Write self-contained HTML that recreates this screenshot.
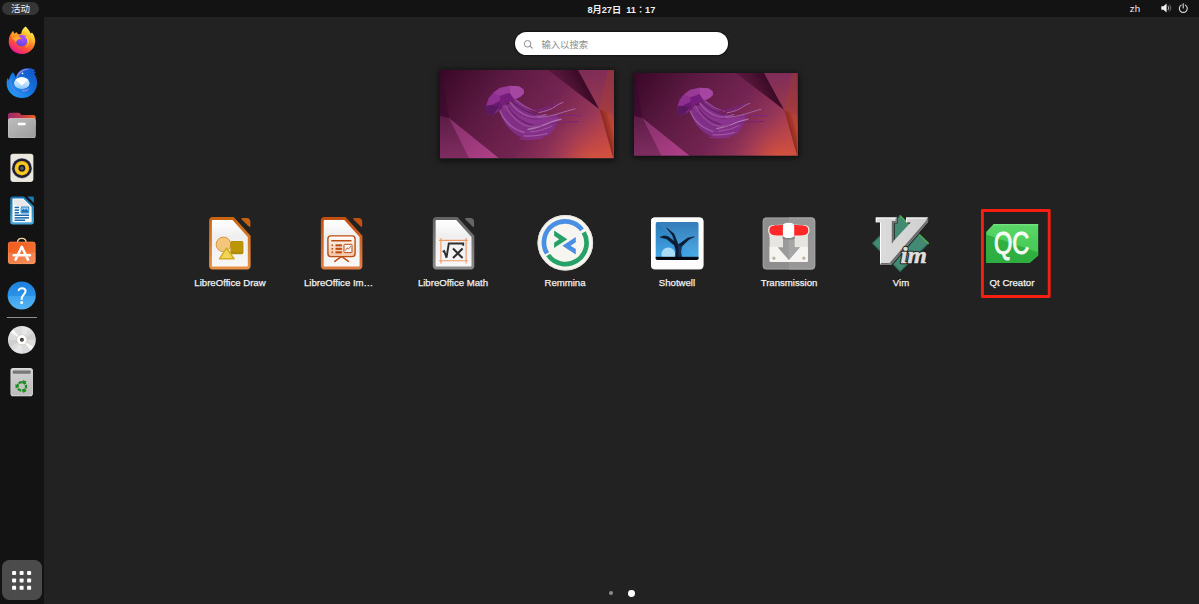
<!DOCTYPE html>
<html lang="zh">
<head>
<meta charset="utf-8">
<title>活动</title>
<style>
html,body{margin:0;padding:0;}
body{width:1199px;height:604px;overflow:hidden;background:#222222;position:relative;
  font-family:"Liberation Sans","Noto Sans CJK SC",sans-serif;color:#f2f2f2;}
.abs{position:absolute;}
#topbar{position:absolute;left:0;top:0;width:1199px;height:17px;background:#131313;}
#dock{position:absolute;left:0;top:17px;width:43.5px;height:587px;background:#131313;}
#act{position:absolute;left:2px;top:2px;width:37px;height:13px;border-radius:7px;background:#353535;
  font-size:9.5px;line-height:13.8px;text-align:center;color:#f0f0f0;}
#clock{position:absolute;left:587.4px;top:0;height:17px;line-height:21.4px;
  font-size:9.2px;font-weight:bold;color:#f0f0f0;white-space:pre;}
#zh{position:absolute;left:1129.8px;top:0;height:17px;line-height:18.2px;font-size:9.7px;color:#f0f0f0;}
#search{position:absolute;left:515.1px;top:31.7px;width:212.6px;height:23.8px;border-radius:12px;background:#ffffff;box-shadow:0 0 0.6px 1.2px #141414;}
#search span{position:absolute;left:26.4px;top:0;line-height:27.6px;font-size:9.3px;color:#8c8c8c;}
.lbl{position:absolute;top:276px;-webkit-text-stroke:0.25px #f2f2f2;width:110px;text-align:center;font-size:9.6px;line-height:13px;color:#f2f2f2;
  font-family:"Liberation Sans",sans-serif;white-space:nowrap;}
#sel{position:absolute;left:981px;top:209.1px;width:63.9px;height:83.1px;border:2.9px solid #f81f12;}
#apps{position:absolute;left:2px;top:560px;width:40px;height:40px;border-radius:7.5px;background:#4b4b4b;}
.dot{position:absolute;border-radius:50%;}
</style>
</head>
<body>
<div id="topbar">
  <div id="act">活动</div>
  <div id="clock">8月27日  11∶17</div>
  <div id="zh">zh</div>
  <svg class="abs" style="left:1156px;top:0" width="40" height="17" viewBox="1156 0 40 17">
    <path d="M1161.3 6.2 L1163.4 6.2 L1166.6 3.4 L1166.6 12.4 L1163.4 9.7 L1161.3 9.7 Z" fill="#f0f0f0"/>
    <path d="M1167.9 5.9 C1169 7 1169 8.9 1167.9 10" fill="none" stroke="#d0d0d0" stroke-width="0.9"/>
    <path d="M1169.2 4.5 C1171.2 6.4 1171.2 9.6 1169.2 11.5" fill="none" stroke="#777" stroke-width="0.9"/>
    <path d="M1181.2 5.1 A3.95 3.95 0 1 0 1185.4 5.1" fill="none" stroke="#d8d8d8" stroke-width="1.1" stroke-linecap="round"/>
    <path d="M1183.2 3.7 L1183.2 8" stroke="#d8d8d8" stroke-width="1.1" stroke-linecap="round"/>
  </svg>
</div>
<div id="dock"></div>
<!--DOCK-->
<svg class="abs" style="left:0;top:17px" width="44" height="587" viewBox="0 17 44 587">
<defs>
  <linearGradient id="ffBody" x1="0.8" y1="0.08" x2="0.28" y2="0.98">
    <stop offset="0" stop-color="#fff36a"/><stop offset="0.25" stop-color="#ffc428"/><stop offset="0.5" stop-color="#ff7c28"/><stop offset="0.72" stop-color="#ff4a3e"/><stop offset="1" stop-color="#e6169e"/>
  </linearGradient>
  <radialGradient id="ffGlobe" cx="0.6" cy="0.25" r="0.9">
    <stop offset="0" stop-color="#b050f8"/><stop offset="0.55" stop-color="#8048ee"/><stop offset="1" stop-color="#4a44d0"/>
  </radialGradient>
  <linearGradient id="ffTail" x1="0" y1="0" x2="1" y2="0.6">
    <stop offset="0" stop-color="#ff7a1f"/><stop offset="0.5" stop-color="#ffb02a"/><stop offset="1" stop-color="#ff8a2a"/>
  </linearGradient>
  <linearGradient id="tbBody" x1="0.85" y1="0.1" x2="0.15" y2="0.9">
    <stop offset="0" stop-color="#1258c8"/><stop offset="0.45" stop-color="#1470dc"/><stop offset="1" stop-color="#2398f4"/>
  </linearGradient>
  <linearGradient id="tbEnv" x1="0" y1="0" x2="0" y2="1">
    <stop offset="0" stop-color="#eef7ff"/><stop offset="0.45" stop-color="#c8e4fd"/><stop offset="1" stop-color="#8cc8f8"/>
  </linearGradient>
  <linearGradient id="flBack" x1="0" y1="0" x2="1" y2="0">
    <stop offset="0" stop-color="#9c2a6e"/><stop offset="0.5" stop-color="#c23a4a"/><stop offset="1" stop-color="#ee5f1a"/>
  </linearGradient>
  <linearGradient id="flFront" x1="0" y1="0" x2="1" y2="1">
    <stop offset="0" stop-color="#bdbdbd"/><stop offset="1" stop-color="#9c9c9c"/>
  </linearGradient>
  <linearGradient id="lowB" x1="0" y1="0" x2="0" y2="1">
    <stop offset="0" stop-color="#1573b0"/><stop offset="1" stop-color="#4baadc"/>
  </linearGradient>
  <linearGradient id="swBag" x1="0" y1="0" x2="1" y2="1">
    <stop offset="0" stop-color="#f05a1c"/><stop offset="1" stop-color="#f47a3c"/>
  </linearGradient>
  <linearGradient id="hlp" x1="0" y1="0" x2="0" y2="1">
    <stop offset="0" stop-color="#1d7fdc"/><stop offset="0.52" stop-color="#2a93e8"/><stop offset="0.53" stop-color="#3ea2ee"/><stop offset="1" stop-color="#56b6f4"/>
  </linearGradient>
  <linearGradient id="trash" x1="0" y1="0" x2="0" y2="1">
    <stop offset="0" stop-color="#d2d2d2"/><stop offset="1" stop-color="#bcbcbc"/>
  </linearGradient>
</defs>

<!-- Firefox -->
<g>
  <path d="M25.5 26.4 C27.6 28.2 29.6 30.6 30.6 33.4 C31.2 32.6 31.9 32.4 32.4 32.9 C34.3 35.4 35.3 38.6 35.2 41.6 C35 48.6 29.2 54 22 54 C14.7 54 8.7 48.4 8.7 41.4 C8.7 37.4 10.4 33.6 13.1 31.1 C13.3 32.2 13.9 33.2 14.7 33.9 C15.1 33.1 15.7 32.5 16.4 32.2 C16.9 33.2 17.8 34 18.8 34.4 C19.6 34 20.4 33.8 21.2 33.7 C21.4 30.8 23 28.2 25.5 26.4 Z" fill="url(#ffBody)"/>
  <circle cx="21.6" cy="40.6" r="5.7" fill="url(#ffGlobe)"/>
  <path d="M11.9 38.3 C13.6 36.2 16.3 35.4 18.6 36.2 C20 36.7 21.2 37.8 22 39 C20.6 38.8 19.2 39 18.2 39.6 C17.2 40.2 16.3 41.2 16 42.4 C15.2 41.2 14.6 40 13.4 39.4 C12.9 39.1 12.3 38.8 11.9 38.3 Z" fill="url(#ffTail)"/>
  <path d="M26 35.6 C28.8 37.6 29.8 41.4 28.4 44.6 C27.6 46.4 26.2 47.8 24.4 48.6 C27.6 46.6 28.6 42.6 27 39.6 C26.4 38.4 25.4 37.4 24.2 36.8 Z" fill="#ffd23a" opacity="0.85"/><path d="M13.1 31.1 C13.3 32.2 13.9 33.2 14.7 33.9 C15.1 33.1 15.7 32.5 16.4 32.2 C16.9 33.2 17.8 34 18.8 34.4 C16.2 34.6 13.4 36 11.9 38.3 C11.4 36 11.8 33.2 13.1 31.1 Z" fill="#ffa024" opacity="0.9"/><path d="M22 35 C23.8 34.8 25.6 35.4 26.8 36.4 C26 36.4 25.4 36.8 25 37.4 C24.2 36.2 23.2 35.4 22 35 Z" fill="#c060f0"/>
</g>

<!-- Thunderbird -->
<g>
  <path d="M12.7 72.3 C14.2 73.6 15.4 75.6 15.9 77.8 C16.6 75.2 18 72.6 20.2 70.8 C23.2 68.2 27.6 67.4 31.4 68.6 C32.8 69 34.2 69.4 35.4 70.2 C34.8 70.6 34.2 70.8 33.6 71.2 C34.6 71.4 35.4 71.8 36 72.4 C35.2 72.6 34.6 73 34.2 73.4 C36.2 76.2 37.2 79.6 37.1 83.2 C36.9 91.4 30.4 98.1 22.2 98.1 C13.8 98.1 6.6 91.6 6.6 83.2 C6.6 81.4 7 79.4 7.8 77.8 C8 78.8 8.4 79.6 9 80.2 C9.4 77.2 10.8 74.4 12.7 72.3 Z" fill="url(#tbBody)"/>
  <path d="M16.4 76.6 C17.2 73.2 20 70.4 23.4 69.4 C25.6 68.8 28 68.9 30 69.6 C27 69.6 23.6 70.6 21.2 72.6 C19.4 74 17.8 76 17 78.2 Z" fill="#9a86e8" opacity="0.85"/>
  <path d="M10.2 81.6 C10.2 86 12.4 90.2 16 92.6 C18.2 94 20.8 94.8 23.4 94.6 C19.6 94 16 91.6 14 88.4 C12.6 86.4 11.6 84 11.4 81.6 C11.4 79.8 11.6 78 12.4 76.4 C11 77.8 10.2 79.6 10.2 81.6 Z" fill="#8a7ae0" opacity="0.55"/>
  <ellipse cx="21.8" cy="83.2" rx="7.7" ry="5.9" fill="url(#tbEnv)"/>
  <path d="M15.4 80 L21.8 85.8 L28.2 80 C26.6 78.2 24.4 77.3 21.8 77.3 C19.2 77.3 17 78.2 15.4 80 Z" fill="#ffffff"/>
  <path d="M15.2 80.2 L21.8 86.2 L28.4 80.2" fill="none" stroke="#a6d2f8" stroke-width="0.7"/>
  <path d="M21.4 89.6 C24.4 90 27.6 89.4 30.2 87.4 C28.4 90.4 25.4 92 22.6 91.6 Z" fill="#a78be6" opacity="0.7"/>
  <circle cx="22.5" cy="73.4" r="0.8" fill="#ffffff"/>
</g>

<!-- Files -->
<g>
  <path d="M8 115 C8 113.8 9 112.8 10.2 112.8 L18.6 112.8 C19.2 112.8 19.8 113.1 20.2 113.6 L21.2 115 L33.6 115 C34.8 115 35.7 116 35.7 117.2 L35.7 126 L8 126 Z" fill="url(#flBack)"/>
  <rect x="8" y="118.2" width="27.6" height="19.9" rx="2.2" fill="#d9d9d9"/>
  <rect x="8.3" y="118.7" width="27" height="19.1" rx="1.9" fill="url(#flFront)"/>
  <rect x="17.8" y="122.7" width="7.8" height="2.5" rx="0.7" fill="#ffffff"/>
</g>

<!-- Rhythmbox -->
<g>
  <rect x="10.4" y="153.7" width="23" height="28.2" rx="2.8" fill="#dedbcf"/>
  <rect x="11" y="154.3" width="21.8" height="27" rx="2.2" fill="#ebe9df"/>
  <circle cx="21.9" cy="168.2" r="10.3" fill="#1e1d36" opacity="0.35"/><circle cx="21.9" cy="168.2" r="9.7" fill="#1e1d36"/>
  <circle cx="21.9" cy="168.2" r="7.3" fill="#f3bf10"/>
  <circle cx="21.9" cy="168.2" r="5.2" fill="none" stroke="#f9d548" stroke-width="0.9"/>
  <circle cx="21.9" cy="168.2" r="3.4" fill="#1a1a2c"/>
  <circle cx="21.9" cy="168.2" r="1.8" fill="#5a5a62"/>
</g>

<!-- LibreOffice Writer -->
<g>
  <path d="M12.6 196.4 L24 196.4 L33.9 206.2 L33.9 222 C33.9 223.4 32.8 224.4 31.4 224.4 L12.6 224.4 C11.2 224.4 10.2 223.4 10.2 222 L10.2 198.8 C10.2 197.4 11.2 196.4 12.6 196.4 Z" fill="url(#lowB)"/>
  <path d="M13.2 198.6 L23.3 198.6 L31.6 207 L31.6 221.4 C31.6 221.9 31.2 222.2 30.8 222.2 L13.2 222.2 C12.8 222.2 12.5 221.9 12.5 221.4 L12.5 199.3 C12.5 198.9 12.8 198.6 13.2 198.6 Z" fill="#ffffff"/>
  <path d="M13.6 199.6 L23 199.6 L30.6 207.2 L30.6 209 L13.6 205 Z" fill="#e6e6e6" opacity="0.9"/>
  <path d="M27.3 196.6 L32.6 196.6 C33.4 196.6 33.9 197.2 33.9 198 L33.9 202.9 Z" fill="#1a7ab8"/>
  <g fill="#1768ac">
    <rect x="14.6" y="206.7" width="4.4" height="1.5"/>
    <rect x="14.6" y="209.4" width="4.4" height="1.5"/>
    <rect x="14.6" y="212" width="4.4" height="1.5"/>
    <rect x="14.6" y="214.5" width="14.4" height="1.5"/>
    <rect x="14.6" y="217.1" width="14.4" height="1.5"/>
    <rect x="14.6" y="219.5" width="10.6" height="1.5"/>
  </g>
  <rect x="20.6" y="206.6" width="8.6" height="6.9" rx="1.3" fill="#2a86c8"/>
  <rect x="21.5" y="207.5" width="6.8" height="5.1" rx="0.5" fill="#9fd0f0"/>
  <path d="M21.5 212.6 L21.5 211 L23.4 208.6 L24.6 210.2 L26 208.4 L28.3 211.2 L28.3 212.6 Z" fill="#1c72b4"/>
</g>

<!-- Ubuntu Software -->
<g>
  <path d="M17.4 243.2 C17.4 240.2 19.2 238.4 21.8 238.4 C24.4 238.4 26.2 240.2 26.2 243.2" fill="none" stroke="#f3d9a4" stroke-width="1.3"/>
  <rect x="8" y="241.8" width="27.5" height="22.2" rx="2.4" fill="url(#swBag)"/>
  <path d="M8 252.8 L35.5 252.8 L35.5 261.6 C35.5 262.9 34.4 264 33.1 264 L10.4 264 C9.1 264 8 262.9 8 261.6 Z" fill="#ffffff" opacity="0.14"/>
  <rect x="8.3" y="242.1" width="26.9" height="21.6" rx="2.1" fill="none" stroke="#ffb48a" stroke-width="0.5" opacity="0.6"/>
  <path d="M15.6 259.6 L21.8 246.8 L28 259.6" fill="none" stroke="#ffffff" stroke-width="2.5" stroke-linejoin="round" stroke-linecap="round"/>
  <path d="M13.8 255.2 L29.9 255.2" fill="none" stroke="#ffffff" stroke-width="2.5" stroke-linecap="round"/>
  <path d="M14 256.3 L29.6 256.3" fill="none" stroke="#f3b89a" stroke-width="0.5"/>
</g>

<!-- Help -->
<g>
  <circle cx="21.7" cy="295.5" r="14.1" fill="url(#hlp)"/>
  <path d="M18.7 290.3 C19.2 288.8 20.4 288.2 22 288.2 C24.2 288.2 25.6 289.4 25.6 291.1 C25.6 292.7 24.7 293.6 23.5 294.9 C22.3 296.2 21.7 297.2 21.7 298.9" fill="none" stroke="#ffffff" stroke-width="2" stroke-linecap="round"/>
  <circle cx="21.6" cy="302.6" r="1.5" fill="#ffffff"/>
</g>

<!-- separator -->
<rect x="6.8" y="317" width="30.2" height="1" fill="#8f8f8f"/>

<!-- Disc -->
<g transform="translate(21.9 339.8)">
  <circle r="13.9" fill="#d2d2d2"/>
  <circle r="13.4" fill="#dcdcdc"/>
  <path d="M0 0 L-11.3 -7.3 A13.4 13.4 0 0 1 -8.7 -10.3 Z" fill="#f8f8f8"/>
  <path d="M0 0 L11.3 7.3 A13.4 13.4 0 0 1 8.7 10.3 Z" fill="#f8f8f8"/>
  <path d="M0 0 L0 -13.4 A13.4 13.4 0 0 1 7.7 -10.9 Z" fill="#e7e7e7"/>
  <path d="M0 0 L0 13.4 A13.4 13.4 0 0 1 -7.7 10.9 Z" fill="#e7e7e7"/>
  <path d="M0 0 L-13.4 0 A13.4 13.4 0 0 0 -11.5 6.9 Z" fill="#cfcfcf"/>
  <path d="M0 0 L13.4 0 A13.4 13.4 0 0 0 11.5 -6.9 Z" fill="#cfcfcf"/>
  <circle r="5.4" fill="#cfc5ac"/>
  <circle r="4.8" fill="#ffffff"/>
  <circle r="2" fill="#3a3a3a"/>
  <circle r="1" fill="#555555"/>
</g>

<!-- Trash -->
<g>
  <rect x="10.5" y="368" width="22.4" height="28.2" rx="2.8" fill="#e2e2e2"/>
  <rect x="11.2" y="368.7" width="21" height="26.8" rx="2.2" fill="url(#trash)"/>
  <rect x="12.7" y="370.6" width="18" height="3.2" rx="1" fill="#787878"/>
  <g transform="translate(21.8 386.4)">
    <circle r="4.3" fill="none" stroke="#1d8f1d" stroke-width="2.3" stroke-dasharray="3.7 0.803" transform="rotate(-84)"/>
    <g fill="#1d8f1d">
      <path id="rcyA" d="M1.2 -6.4 L5 -4.6 L1.6 -2.2 Z"/>
      <use href="#rcyA" transform="rotate(120)"/>
      <use href="#rcyA" transform="rotate(240)"/>
    </g>
  </g>
</g>
</svg>
<!--/DOCK-->
<div id="apps"><svg class="abs" style="left:0;top:0" width="40" height="40" viewBox="0 0 40 40"><rect x="10.1" y="10.9" width="4" height="4" rx="0.9" fill="#ffffff"/><rect x="17.6" y="10.9" width="4" height="4" rx="0.9" fill="#ffffff"/><rect x="25.1" y="10.9" width="4" height="4" rx="0.9" fill="#ffffff"/><rect x="10.1" y="18.4" width="4" height="4" rx="0.9" fill="#ffffff"/><rect x="17.6" y="18.4" width="4" height="4" rx="0.9" fill="#ffffff"/><rect x="25.1" y="18.4" width="4" height="4" rx="0.9" fill="#ffffff"/><rect x="10.1" y="25.8" width="4" height="4" rx="0.9" fill="#ffffff"/><rect x="17.6" y="25.8" width="4" height="4" rx="0.9" fill="#ffffff"/><rect x="25.1" y="25.8" width="4" height="4" rx="0.9" fill="#ffffff"/></svg></div>
<div id="search"><svg class="abs" style="left:6px;top:5px" width="16" height="16" viewBox="521 37 16 16"><circle cx="527.6" cy="43.8" r="3.3" fill="none" stroke="#8a8a8a" stroke-width="0.95"/><path d="M530 46.2 L532.4 48.2" stroke="#8a8a8a" stroke-width="1.1" stroke-linecap="round"/></svg><span>输入以搜索</span></div>

<!--WP-->
<svg class="abs" style="left:0;top:0" width="0" height="0">
<defs>
  <linearGradient id="wpBase" gradientUnits="userSpaceOnUse" x1="10" y1="-10" x2="160" y2="100">
    <stop offset="0" stop-color="#3a0828"/><stop offset="0.3" stop-color="#5c1a42"/><stop offset="0.58" stop-color="#742452"/><stop offset="0.78" stop-color="#963658"/><stop offset="0.92" stop-color="#bc4648"/><stop offset="1" stop-color="#d4523a"/>
  </linearGradient>
  <radialGradient id="wpGlow" gradientUnits="userSpaceOnUse" cx="154" cy="94" r="50">
    <stop offset="0" stop-color="#dc563a" stop-opacity="0.9"/><stop offset="0.5" stop-color="#c84a44" stop-opacity="0.4"/><stop offset="1" stop-color="#b04050" stop-opacity="0"/>
  </radialGradient>
  <linearGradient id="wpDarkTri" gradientUnits="userSpaceOnUse" x1="140" y1="10" x2="118" y2="22">
    <stop offset="0" stop-color="#3e0c28"/><stop offset="1" stop-color="#4e1234" stop-opacity="0.55"/>
  </linearGradient>
  <linearGradient id="wpLightTri" gradientUnits="userSpaceOnUse" x1="150" y1="0" x2="160" y2="38">
    <stop offset="0" stop-color="#7e2c58"/><stop offset="1" stop-color="#983850"/>
  </linearGradient>
  <linearGradient id="wpRight" gradientUnits="userSpaceOnUse" x1="168" y1="0" x2="172" y2="88">
    <stop offset="0" stop-color="#8c3246"/><stop offset="0.45" stop-color="#a23a40"/><stop offset="0.75" stop-color="#c84a34"/><stop offset="1" stop-color="#dc5630"/>
  </linearGradient>
  <linearGradient id="wpCrease" gradientUnits="userSpaceOnUse" x1="164" y1="60" x2="176" y2="56.5">
    <stop offset="0" stop-color="#7e241e" stop-opacity="1"/><stop offset="0.5" stop-color="#a03222" stop-opacity="0.7"/><stop offset="1" stop-color="#e05a36" stop-opacity="0"/>
  </linearGradient>
  <linearGradient id="wpBLa" gradientUnits="userSpaceOnUse" x1="0" y1="46" x2="6" y2="88"><stop offset="0" stop-color="#5c1c46"/><stop offset="1" stop-color="#7e2c60"/></linearGradient>
  <linearGradient id="wpBL" gradientUnits="userSpaceOnUse" x1="10" y1="50" x2="45" y2="90">
    <stop offset="0" stop-color="#86306a"/><stop offset="1" stop-color="#ac3e86"/>
  </linearGradient>
  <symbol id="wp" viewBox="0 0 174 88.3" preserveAspectRatio="none">
    <rect width="174" height="88.3" fill="url(#wpBase)"/>
    <rect width="174" height="88.3" fill="url(#wpGlow)"/>
    <!-- left wedge + bottom-left facets -->
    <path d="M0 0 L1.2 0 L9 48 L0 48 Z" fill="#36082a" opacity="0.5"/>
    <path d="M0 46 L9 48 L29 88.3 L0 88.3 Z" fill="url(#wpBLa)"/>
    <path d="M9 48 L59 88.3 L29 88.3 Z" fill="url(#wpBL)"/>
    <!-- top-right facets -->
    <path d="M108 0 L138.3 0 L159.8 39.6 Z" fill="url(#wpDarkTri)"/>
    <path d="M138.3 0 L168.1 0 L159.8 39.6 Z" fill="url(#wpLightTri)"/>
    <path d="M168.1 0 L174 0 L174 88.3 L173.4 88.3 L159.8 39.6 Z" fill="url(#wpRight)"/>
    <path d="M159.8 39.6 L173.4 88.3 L174 88.3 L174 45 Z" fill="url(#wpCrease)"/>
    <!-- jellyfish tentacles -->
    <g fill="none" stroke-linecap="round" stroke-linejoin="round">
      <path d="M60 40 C62 52 70 62 82 67.5 C90 70 100 69 110 64.5 C114 60 117 55 118 50.5 C112 48 104 46 93 42.5 C88 40 82 34 76 29 Z" fill="#82308a" stroke="none" opacity="0.92"/>
      <path d="M64 36 C72 44 80 50 92 52 C100 53 108 50 116 47" stroke="#8a3490" stroke-width="4.5"/>
      <path d="M62 40 C66 50 74 58 84 62 C92 64.5 102 63 110 59" stroke="#83308a" stroke-width="3"/>
      <path d="M72 31 C78 37 86 42 96 44.5" stroke="#652068" stroke-width="1.6"/>
      <path d="M68 38 C74 46 82 52 92 55" stroke="#642066" stroke-width="1.2"/>
      <path d="M99 42.5 C106 41.5 112 39 116 36 C119 34 121 33 123 32.5" stroke="#aa6aac" stroke-width="1"/>
      <path d="M98 47.5 C108 47 116 44.5 124 42 C129 40.5 132 39.5 135 38.9" stroke="#a666a8" stroke-width="1"/>
      <path d="M112 47.5 C120 45.5 130 44.5 141.5 46" stroke="#7a2488" stroke-width="0.9"/>
      <path d="M104 54.5 C114 52.5 126 52 138 51.7" stroke="#74207e" stroke-width="0.9"/>
      <path d="M100 39.5 C106 38 112 35 118 33.5" stroke="#7a2488" stroke-width="0.9"/>
      <path d="M88 59.5 C96 58 104 55 110 52.5 C114 51 118 50 121 49.3" stroke="#ae70ae" stroke-width="1.4"/>
      <path d="M60 41 C63 48 68 54 73 57.5 C77 60 80 61.5 84 62.5" stroke="#a25ca2" stroke-width="1.3"/>
      <path d="M70 32 C74 38 80 43 88 46 C94 48 100 47 106 44.5" stroke="#9c509e" stroke-width="1.6"/>
      <path d="M66 36 C70 44 76 51 84 55 C90 57.5 96 57 102 55" stroke="#944696" stroke-width="1.5"/>
      <path d="M76 30 C82 35 88 39 96 41" stroke="#9a489c" stroke-width="1.2"/>
      <path d="M84 66 C92 66.5 100 65.5 107 63.5" stroke="#ac60ac" stroke-width="1"/>
      <path d="M80 68.5 C88 70 96 69.5 102 68" stroke="#8e3092" stroke-width="1"/>
      <path d="M92 40 C98 41 104 40 110 38" stroke="#7a2488" stroke-width="1"/>
      <path d="M90 62 C98 61.5 106 59 112 56" stroke="#a455a4" stroke-width="1"/>
    </g>
    <!-- jellyfish bell -->
    <path d="M45.8 41.2 L46.4 35.4 L48.7 28.5 L53.4 22.7 L59.7 18 L69.6 15.7 L78.9 16.3 L83.5 19.2 L84.1 23.3 L80.6 26.7 L74.2 29.6 L67.3 32.5 L62 36.6 L58 41.2 L53.4 44.7 L48.7 45.3 Z" fill="#8a2c8c"/>
    <path d="M45.8 41.2 L46.4 35.4 L52.2 34.8 L59.7 36.6 L53.4 44.7 L48.7 45.3 Z" fill="#5a1860"/>
    <path d="M48.7 28.5 L53.4 22.7 L59.7 26.1 L60.3 30.8 L52.2 34.8 L46.4 35.4 Z" fill="#8e3092"/>
    <path d="M53.4 22.7 L59.7 18 L69.6 15.7 L69.6 22.7 L59.7 26.1 Z" fill="#983a96"/>
    <path d="M69.6 15.7 L78.9 16.3 L83.5 19.2 L84.1 23.3 L80.6 26.7 L74.2 29.6 L69.6 22.7 Z" fill="#a446a2"/>
    <path d="M59.7 26.1 L69.6 22.7 L74.2 29.6 L67.3 32.5 L62 36.6 L60.3 30.8 Z" fill="#751c7c"/>
    <path d="M52.2 34.8 L60.3 30.8 L62 36.6 L58 41.2 L59.7 36.6 Z" fill="#6a1a70"/>
  </symbol>
</defs>
</svg>
<div class="abs" style="left:440.2px;top:70.4px;width:173.9px;height:88.3px;box-shadow:0 1px 6px 1px rgba(0,0,0,0.6);"><svg width="173.9" height="88.3" style="display:block"><use href="#wp" width="173.9" height="88.3"/></svg></div>
<div class="abs" style="left:634px;top:73.1px;width:163.7px;height:82.7px;box-shadow:0 1px 6px 1px rgba(0,0,0,0.6);"><svg width="163.7" height="82.7" style="display:block"><use href="#wp" width="163.7" height="82.7"/></svg></div>
<!--/WP-->
<!--APPS-->
<svg class="abs" style="left:180px;top:205px" width="880" height="75" viewBox="180 205 880 75">
<defs>
  <linearGradient id="drawB" x1="0" y1="0" x2="0" y2="1"><stop offset="0" stop-color="#c8640f"/><stop offset="1" stop-color="#e89246"/></linearGradient>
  <linearGradient id="impB" x1="0" y1="0" x2="0" y2="1"><stop offset="0" stop-color="#c34f0e"/><stop offset="1" stop-color="#e27d44"/></linearGradient>
  <linearGradient id="mathB" x1="0" y1="0" x2="0" y2="1"><stop offset="0" stop-color="#636363"/><stop offset="1" stop-color="#8c8c8c"/></linearGradient>
  <linearGradient id="paper" x1="0" y1="0" x2="0" y2="1"><stop offset="0" stop-color="#ffffff"/><stop offset="0.35" stop-color="#efefef"/><stop offset="1" stop-color="#f7f7f7"/></linearGradient>
  <linearGradient id="impScr" x1="0" y1="0" x2="0" y2="1"><stop offset="0" stop-color="#ffffff"/><stop offset="1" stop-color="#f3c3a2"/></linearGradient>
  <linearGradient id="sky" x1="0" y1="0" x2="0" y2="1"><stop offset="0" stop-color="#2a75b4"/><stop offset="1" stop-color="#46aeee"/></linearGradient>
  <linearGradient id="qcG" x1="0" y1="0" x2="0" y2="1"><stop offset="0" stop-color="#5ad868"/><stop offset="1" stop-color="#3cc24c"/></linearGradient>
  <linearGradient id="vimV" x1="0" y1="0" x2="1" y2="0"><stop offset="0" stop-color="#dcdcdc"/><stop offset="1" stop-color="#cfcfcf"/></linearGradient>
  <!-- document page template, origin = doc top-left (41.5 x 52.4) -->
  <path id="docOuter" d="M3.4 0 L24.6 0 L41.5 18.8 L41.5 49 C41.5 50.9 40 52.4 38.1 52.4 L3.4 52.4 C1.5 52.4 0 50.9 0 49 L0 3.4 C0 1.5 1.5 0 3.4 0 Z"/>
  <path id="docInner" d="M3.9 2.9 L23.4 2.9 L38.7 19.9 L38.7 48.4 C38.7 49.1 38.2 49.6 37.5 49.6 L3.9 49.6 C3.2 49.6 2.8 49.1 2.8 48.4 L2.8 4 C2.8 3.4 3.2 2.9 3.9 2.9 Z"/>
  <path id="docCorner" d="M33.2 0.9 L37.6 0.9 C39.8 0.9 41.3 2.4 41.3 4.6 L41.3 9 C41.3 9.9 40.4 10.2 39.8 9.6 L32.6 2.4 C32 1.8 32.3 0.9 33.2 0.9 Z"/>
</defs>

<!-- LibreOffice Draw -->
<g transform="translate(209.1 217)">
  <use href="#docOuter" fill="url(#drawB)"/>
  <use href="#docInner" fill="url(#paper)"/>
  <use href="#docCorner" fill="#c8610f"/>
  <circle cx="14.4" cy="27.4" r="7.3" fill="#f3c67c" stroke="#d8963a" stroke-width="1"/>
  <rect x="21.3" y="24.1" width="13" height="13.2" rx="1.8" fill="#b18a08"/>
  <rect x="22" y="24.8" width="11.6" height="10" rx="1.2" fill="#bd9606"/>
  <path d="M17.4 31.2 L25 41.8 L10.4 41.8 Z" fill="#f2d458" stroke="#d4ad20" stroke-width="1.5" stroke-linejoin="round"/>
</g>

<!-- LibreOffice Impress -->
<g transform="translate(320.9 217)">
  <use href="#docOuter" fill="url(#impB)"/>
  <use href="#docInner" fill="url(#paper)"/>
  <use href="#docCorner" fill="#c1500f"/>
  <path d="M20.7 39.4 L13.9 44.4 M20.7 39.4 L27.5 44.4" stroke="#bd4e12" stroke-width="1.5" stroke-linecap="round" fill="none"/>
  <rect x="7" y="18.9" width="27.2" height="20.7" rx="3" fill="url(#impScr)" stroke="#bd4e12" stroke-width="1.4"/>
  <rect x="10.3" y="22.9" width="20.4" height="1.7" rx="0.5" fill="#bd4e12"/>
  <g fill="#bd4e12">
    <rect x="10.6" y="27.5" width="1.6" height="1.6"/><rect x="14.6" y="27.3" width="6.4" height="2.1"/>
    <rect x="10.6" y="31" width="1.6" height="1.6"/><rect x="14.6" y="30.8" width="6.4" height="2.1"/>
    <rect x="10.6" y="34.5" width="1.6" height="1.6"/><rect x="14.6" y="34.3" width="6.4" height="2.1"/>
  </g>
  <rect x="23.1" y="27.3" width="8" height="8.3" rx="0.8" fill="#f4f8fb" stroke="#bd4e12" stroke-width="1"/>
  <path d="M24.4 33.6 L26.4 30.8 L27.6 32.2 L29.9 29" fill="none" stroke="#bd4e12" stroke-width="0.9"/>
</g>

<!-- LibreOffice Math -->
<g transform="translate(432.8 217)">
  <use href="#docOuter" fill="url(#mathB)"/>
  <use href="#docInner" fill="url(#paper)"/>
  <use href="#docCorner" fill="#666666"/>
  <path d="M8.1 20.9 L8.1 46.4 M33.3 20.9 L33.3 46.4 M6.3 23.4 L35 23.4 M6.3 43.7 L35 43.7" stroke="#f09a68" stroke-width="1.15" fill="none"/>
  <path d="M9.9 34.8 L11.4 34 L13.7 40.6 L16 26.5 L30.4 26.5 L30.4 28.8" fill="none" stroke="#2e2e2e" stroke-width="1.9" stroke-linejoin="miter"/>
  <path d="M20.2 31.6 L29.8 41.1 M29.8 31.6 L20.2 41.1" stroke="#2e2e2e" stroke-width="2.1" fill="none"/>
</g>

<!-- Remmina -->
<g transform="translate(565.3 242.8)">
  <circle r="27.8" fill="#f6f5f0"/>
  <circle r="27.3" fill="none" stroke="#e4e2da" stroke-width="1"/>
  <path d="M-18.3 10.6 A21.1 21.1 0 0 1 16.7 -12.9" fill="none" stroke="#4a90e2" stroke-width="4.7"/>
  <path d="M18.4 -10.4 A21.1 21.1 0 0 1 -17.2 12.2" fill="none" stroke="#26a269" stroke-width="4.7"/>
  <path d="M-11.2 -12.2 L2 -3.5 L-11.2 5.2 L-11.2 0 L-6.1 -3.5 L-11.2 -7 Z" fill="#26a269"/>
  <path d="M10.5 -5.8 L-2.9 2.9 L10.5 11.6 L10.5 6.3 L5.3 2.9 L10.5 -0.6 Z" fill="#4a90e2"/>
</g>

<!-- Shotwell -->
<g>
  <rect x="651" y="217.5" width="52.4" height="52" rx="4" fill="#ebebeb"/>
  <rect x="651" y="217.5" width="52.4" height="51.3" rx="4" fill="#fdfdfd"/>
  <clipPath id="shClip"><rect x="655.7" y="221.9" width="42.8" height="38.2" rx="1.8"/></clipPath>
  <g clip-path="url(#shClip)">
    <rect x="655" y="221" width="45" height="40" fill="url(#sky)"/>
    <path d="M655.7 221.9 L698.5 260.1 L698.5 221.9 Z" fill="#ffffff" opacity="0.05"/>
    <circle cx="668.3" cy="254.3" r="6.9" fill="#a9ddf6"/>
    <path d="M675.6 257.1 L675.8 250.3 L674.4 245.3 L666.9 239.1 L660 237.2 L664 235.8 L668.1 236.6 L674.8 241.8 L672.4 235.2 L666.6 227.9 L673.9 233.7 L676.8 241 L678.2 244.8 L687.8 237.9 L694.4 236.7 L688.9 239.5 L681.4 246.8 L680.8 252 L681.6 257.1 Z" fill="#0b1c33" stroke="#0b1c33" stroke-width="0.5" stroke-linejoin="round"/>
    <path d="M678.2 244.8 L681.4 246.8 L680.8 252 L681.6 257.1 L678.6 257.1 Z" fill="#16345a"/>
    <rect x="655" y="256.8" width="45" height="4" fill="#050a10"/>
  </g>
</g>

<!-- Transmission -->
<g>
  <rect x="762.7" y="217.5" width="52.5" height="51.9" rx="3.5" fill="#8e8e8e"/>
  <path d="M789 217.5 L811.7 217.5 C813.6 217.5 815.2 219.1 815.2 221 L815.2 265.9 C815.2 267.8 813.6 269.4 811.7 269.4 L789 269.4 Z" fill="#979797"/>
  <rect x="763.2" y="218" width="51.5" height="50.9" rx="3.1" fill="none" stroke="#b0b0b0" stroke-width="0.8" opacity="0.7"/>
  <rect x="769.6" y="232" width="38.3" height="29.9" rx="1.2" fill="#e7e5df"/>
  <path d="M769.6 246.8 L807.9 246.8 L807.9 260.7 C807.9 261.4 807.4 261.9 806.7 261.9 L770.8 261.9 C770.1 261.9 769.6 261.4 769.6 260.7 Z" fill="#f5f4f1"/>
  <path d="M783 232 L794.4 232 L794.4 247.3 L799.9 247.3 L788.8 260 L777.7 247.3 L783 247.3 Z" fill="#9b9b9b"/>
  <path d="M788.8 232 L794.4 232 L794.4 247.3 L799.9 247.3 L788.8 260 Z" fill="#a6a6a6"/>
  <circle cx="773.9" cy="258.2" r="1.6" fill="#bdb5a4"/>
  <circle cx="803.8" cy="258.2" r="1.6" fill="#bdb5a4"/>
  <rect x="769.6" y="234" width="38" height="3" fill="#e7e5df"/>
  <path d="M782.6 236 L794.6 236 L794.6 238.6 C794.6 239.2 791.8 239.6 788.6 239.6 C785.4 239.6 782.6 239.2 782.6 238.6 Z" fill="#7a7a7a" opacity="0.8"/>
  <path d="M768.1 230.3 C768.1 226.6 770.2 225.2 773.2 225 C778 224.5 799.6 224.5 804.4 225 C807.4 225.2 809.5 226.6 809.5 230.3 C809.5 234 807.4 235.4 804.4 235.6 C799.6 236.1 778 236.1 773.2 235.6 C770.2 235.4 768.1 234 768.1 230.3 Z" fill="#f4f2ef"/>
  <path d="M769.3 230.3 C769.3 227 771.2 225.6 774 225.4 C778.6 224.9 799 224.9 803.6 225.4 C806.4 225.6 808.3 227 808.3 230.3 C808.3 233.6 806.4 235 803.6 235.2 C799 235.7 778.6 235.7 774 235.2 C771.2 235 769.3 233.6 769.3 230.3 Z" fill="#ff2828"/>
  <path d="M782.9 226 C782.9 223.8 785 222.8 788.6 222.8 C792.2 222.8 794.2 223.8 794.2 226 L794.2 235 C794.2 237.2 792.2 238.1 788.6 238.1 C785 238.1 782.9 237.2 782.9 235 Z" fill="#ffffff"/>
</g>

<!-- Vim -->
<g>
  <path d="M900.2 215 L929.2 243.3 L900.2 272.3 L871.8 243.3 Z" fill="#2c6b57"/>
  <path d="M900.2 216.6 L927.6 243.3 L900.2 270.7 L873.4 243.3 Z" fill="#438a73"/>
  <path d="M900.2 215 L929.2 243.3 L928.2 244.3 L899.4 215.9 Z" fill="#55b04a"/>
  <!-- V shadow -->
  <path d="M876.7 218.6 L897.7 218.6 L897.7 223.4 L894.9 223.4 L894.9 241.4 L911.6 223.4 L907 223.4 L907 218.6 L929 218.6 L929 223 L892.1 265.8 L880.9 265.8 L880.9 223.4 L876.7 223.4 Z" fill="#1a1a1a" opacity="0.75"/>
  <path d="M875.8 217.6 L896.8 217.6 L896.8 222.4 L894 222.4 L894 240.4 L910.7 222.4 L906.1 222.4 L906.1 217.6 L928.1 217.6 L928.1 222 L891.2 264.8 L880 264.8 L880 222.4 L875.8 222.4 Z" fill="url(#vimV)"/>
  <path d="M875.8 217.6 L896.8 217.6 L896.2 218.6 L876.8 218.6 L876.8 221.4 L875.8 222.4 Z M906.1 217.6 L928.1 217.6 L927.3 218.6 L907.1 218.6 L907.1 221.4 L906.1 222.4 Z M880 222.4 L881 222.4 L881 263.8 L880 264.8 Z" fill="#ffffff"/>
  <path d="M894 222.4 L894 240.4 L891.8 244 L891.8 222.4 Z M928.1 222 L891.2 264.8 L889.4 263.2 L926.4 220.6 Z M880 264.8 L891.2 264.8 L889.8 263 L881 263 Z M896.8 217.6 L896.8 222.4 L891.8 222.4 L891.8 221 L895.6 221 L895.6 218.6 Z M928.1 217.6 L928.1 222 L926.4 222.4 L926.8 218.6 Z" fill="#6c6c6c"/>
  <text x="900.6" y="263.2" font-family="'Liberation Serif',serif" font-weight="bold" font-style="italic" font-size="23" fill="#1c1c1c" stroke="#1c1c1c" stroke-width="2.3" stroke-linejoin="round" textLength="26.4" lengthAdjust="spacingAndGlyphs">im</text>
  <text x="900.6" y="263.2" font-family="'Liberation Serif',serif" font-weight="bold" font-style="italic" font-size="23" fill="#dedede" stroke="#dedede" stroke-width="0.5" textLength="26.4" lengthAdjust="spacingAndGlyphs">im</text>
</g>

<!-- Qt Creator -->
<g>
  <path d="M993.7 224.1 L1038.2 224.1 L1038.2 255.6 L1029.5 263 L986.2 263 L986.2 232 Z" fill="url(#qcG)"/>
  <path d="M986.2 234.4 L1038.2 252.6 L1038.2 255.6 L1029.5 263 L986.2 263 Z" fill="#2aaa3c" opacity="0.85"/>
  <path d="M993.7 224.1 L1038.2 224.1 L1038.2 225.3 L993.2 225.3 Z" fill="#7ae486" opacity="0.8"/>
  <text transform="translate(994 254.3) scale(0.76 1)" font-family="'Liberation Sans',sans-serif" font-size="31" fill="#ffffff" stroke="#ffffff" stroke-width="1" opacity="0.94">QC</text>
</g>
</svg>
<!--/APPS-->
<div class="lbl" style="left:175px">LibreOffice Draw</div>
<div class="lbl" style="left:283.6px">LibreOffice Im…</div>
<div class="lbl" style="left:398px">LibreOffice Math</div>
<div class="lbl" style="left:510px">Remmina</div>
<div class="lbl" style="left:622px">Shotwell</div>
<div class="lbl" style="left:734px">Transmission</div>
<div class="lbl" style="left:846px">Vim</div>
<div class="lbl" style="left:957px">Qt Creator</div>
<svg class="abs" style="left:975px;top:204px" width="82" height="100" viewBox="975 204 82 100"><rect x="982.4" y="210.5" width="66.8" height="86" fill="none" stroke="#f81f12" stroke-width="2.9" stroke-linejoin="round"/></svg>

<div class="dot" style="left:608.7px;top:591.3px;width:4px;height:4px;background:#8c8c8c"></div>
<div class="dot" style="left:628.4px;top:590px;width:6.9px;height:6.9px;background:#ffffff"></div>
</body>
</html>
